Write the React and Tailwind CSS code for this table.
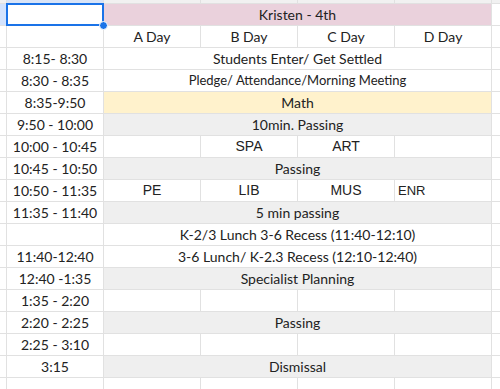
import React from "react";

const font = { fontFamily: "Lato, 'Open Sans', sans-serif" };

const Cell = ({ children, className = "" }) => (
  <div className={`flex items-center justify-center whitespace-nowrap overflow-hidden ${className}`}>
    {children}
  </div>
);

const rows = [
  { time: "8:15- 8:30", merged: "Students Enter/ Get Settled" },
  { time: "8:30 - 8:35", merged: "Pledge/ Attendance/Morning Meeting", small: true },
  { time: "8:35-9:50", merged: "Math", bg: "bg-[#fff2cc]" },
  { time: "9:50 - 10:00", merged: "10min. Passing", bg: "bg-[#efefef]" },
  { time: "10:00 - 10:45", cells: ["", "SPA", "ART", ""] },
  { time: "10:45 - 10:50", merged: "Passing", bg: "bg-[#efefef]" },
  { time: "10:50 - 11:35", cells: ["PE", "LIB", "MUS", "ENR"], left: 3 },
  { time: "11:35 - 11:40", merged: "5 min passing", bg: "bg-[#efefef]" },
  { time: "", merged: "K-2/3 Lunch 3-6 Recess (11:40-12:10)" },
  { time: "11:40-12:40", merged: "3-6 Lunch/ K-2.3 Recess (12:10-12:40)" },
  { time: "12:40 -1:35", merged: "Specialist Planning", bg: "bg-[#efefef]" },
  { time: "1:35 - 2:20", cells: ["", "", "", ""] },
  { time: "2:20 - 2:25", merged: "Passing", bg: "bg-[#efefef]" },
  { time: "2:25 - 3:10", cells: ["", "", "", ""] },
  { time: "3:15", merged: "Dismissal", bg: "bg-[#efefef]" },
  { time: "", cells: ["", "", "", ""] },
];

export default function App() {
  return (
    <div className="w-[500px] h-[389px] overflow-hidden bg-white text-[#222] text-[14px]" style={font}>
      <div className="grid grid-cols-[6px_96px_96px_96px_96px_96px_1fr] auto-rows-[21px] grid-rows-[3px] gap-px bg-[#e1e1e1]">
        {/* top header strip */}
        <div className="bg-[#f1f1f1]" />
        <div className="bg-[#d9e4f7]" />
        <div className="bg-[#f1f1f1]" />
        <div className="bg-[#f1f1f1]" />
        <div className="bg-[#f1f1f1]" />
        <div className="bg-[#f1f1f1]" />
        <div className="bg-[#f1f1f1]" />

        {/* title row */}
        <div className="bg-[#d3e3fd]" />
        <div className="relative bg-white">
          <div className="absolute -left-px -top-px -right-px -bottom-px border-2 border-[#1a73e8]" />
          <div className="absolute -right-[5px] -bottom-[5px] w-[9px] h-[9px] rounded-full bg-[#1a73e8] border border-white z-10" />
        </div>
        <Cell className="col-span-4 bg-[#ead1dc]">Kristen - 4th</Cell>
        <div className="bg-white" />

        {/* day headers */}
        <div className="bg-white" />
        <div className="bg-white" />
        {["A Day", "B Day", "C Day", "D Day"].map((d) => (
          <Cell key={d} className="bg-white">{d}</Cell>
        ))}
        <div className="bg-white" />

        {rows.map((r, i) => (
          <React.Fragment key={i}>
            <div className="bg-white" />
            <Cell className="bg-white">{r.time}</Cell>
            {r.merged !== undefined ? (
              <Cell className={`col-span-4 ${r.bg || "bg-white"} ${r.small ? "text-[13px]" : ""}`}>
                {r.merged}
              </Cell>
            ) : (
              r.cells.map((c, j) => (
                <Cell
                  key={j}
                  className={`bg-white ${r.left === j ? "justify-start pl-[3px] text-[13px]" : ""}`}
                >
                  <span style={{ fontFamily: "'Liberation Sans', Arial, sans-serif" }}>{c}</span>
                </Cell>
              ))
            )}
            <div className="bg-white" />
          </React.Fragment>
        ))}
      </div>
    </div>
  );
}
